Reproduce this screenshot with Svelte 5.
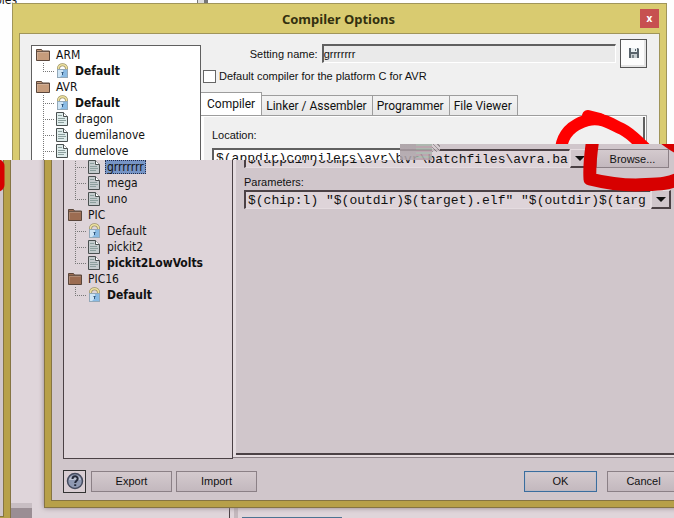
<script>
  const topTree = [
    { name: "ARM", items: [{ name: "Default", locked: true, bold: true }] },
    {
      name: "AVR",
      items: [
        { name: "Default", locked: true, bold: true },
        { name: "dragon" },
        { name: "duemilanove" },
        { name: "dumelove" },
        { name: "", selected: true }
      ]
    }
  ];

  const lowerTree = [
    { name: "", items: [{ name: "grrrrrrr", selected: true }, { name: "mega" }, { name: "uno" }] },
    {
      name: "PIC",
      items: [{ name: "Default", locked: true }, { name: "pickit2" }, { name: "pickit2LowVolts", bold: true }]
    },
    { name: "PIC16", items: [{ name: "Default", locked: true, bold: true }] }
  ];

  const tabs = ["Compiler", "Linker / Assembler", "Programmer", "File Viewer"];

  let activeTab = $state("Compiler");
  let settingName = $state("grrrrrrr");
  let isDefault = $state(false);
  let location = $state("$(appdir)compilers\\avr\\batchfiles\\avra.ba");
  let parameters = $state('$(chip:l) "$(outdir)$(target).elf" "$(outdir)$(targ');
</script>

{#snippet folderIcon()}
  <svg class="icon" viewBox="0 0 16 16" width="16" height="16" aria-hidden="true">
    <path d="M1.5 13.5V2.5H6.5L7.5 4H14.5V13.5Z" fill="var(--folder)" stroke="#5a463b" />
    <path d="M2 4.5H14" stroke="#6d5648" />
    <path d="M2.5 12.5V5.5H13.5" fill="none" stroke="#fff" stroke-opacity="0.2" />
  </svg>
{/snippet}

{#snippet lockIcon()}
  <svg class="icon" viewBox="0 0 16 16" width="16" height="16" aria-hidden="true">
    <path d="M4.5 8V5.5C4.5 0.5 12.5 0.5 12.5 5.5V8" fill="none" stroke="#9c9264" stroke-width="3" />
    <path d="M4.5 8V5.5C4.5 0.5 12.5 0.5 12.5 5.5V8" fill="none" stroke="#ece0a0" stroke-width="1.5" />
    <rect x="3.5" y="6.5" width="10" height="8" fill="#cfe5f5" stroke="#93a8b8" />
    <path d="M9 7H13V14H6L9 11Z" fill="#8abbe4" />
    <path d="M7.5 9.5H9.5M8.5 9V12" stroke="#2f567d" />
  </svg>
{/snippet}

{#snippet fileIcon()}
  <svg class="icon" viewBox="0 0 16 16" width="16" height="16" aria-hidden="true">
    <path d="M2.5 1.5H9.5L13.5 5.5V14.5H2.5Z" fill="var(--paper)" stroke="#4a5050" />
    <path d="M9.5 1.5V5.5H13.5" fill="#fff" stroke="#4a5050" />
    <path d="M4 4.5H8M4 7.5H11M4 9.5H12M4 11.5H10" stroke="#8c9f9d" />
  </svg>
{/snippet}

{#snippet tree(groups)}
  <ul class="tree">
    {#each groups as group}
      <li>
        {#if group.name}
          <div class="row">{@render folderIcon()}<span class="name">{group.name}</span></div>
        {/if}
        <ul class="branch">
          {#each group.items as item}
            <li class="row leaf">
              {#if item.locked}{@render lockIcon()}{:else}{@render fileIcon()}{/if}
              <span class="name" class:bold={item.bold} class:selected={item.selected}>{item.name}</span>
            </li>
          {/each}
        </ul>
      </li>
    {/each}
  </ul>
{/snippet}

<main class="desktop">
  <section class="upper">
    <div class="behind"><span class="behind-text">bles</span><i class="bar"></i></div>

    <div class="dialog">
      <header class="titlebar">
        <h1>Compiler Options</h1>
        <button class="close" aria-label="Close">x</button>
      </header>
      <div class="body">
        {@render tree(topTree)}
        <div class="settings">
          <div class="setting-row">
            <label for="setting-name">Setting name:</label>
            <input id="setting-name" class="sunken" bind:value={settingName} />
            <button class="save" aria-label="Save">
              <svg viewBox="0 0 10 10" width="10" height="10" aria-hidden="true">
                <path d="M0 0H9L10 1V10H0Z" fill="#59636b" />
                <rect x="2" y="0" width="6" height="4" fill="#e8eef0" />
                <rect x="6" y="1" width="1" height="2" fill="#59636b" />
                <rect x="2" y="6" width="6" height="4" fill="#c7ced1" />
                <rect x="3" y="7" width="2" height="3" fill="#7d878c" />
              </svg>
            </button>
          </div>
          <label class="check">
            <input type="checkbox" bind:checked={isDefault} />
            Default compiler for the platform C for AVR
          </label>
          <div class="tabs" role="tablist">
            {#each tabs as tab}
              <button role="tab" aria-selected={activeTab === tab} class:active={activeTab === tab} onclick={() => (activeTab = tab)}>
                {tab}
              </button>
            {/each}
          </div>
          <div class="panel">
            <div class="inner">
              <label for="location">Location:</label>
              <div class="combo"><input id="location" class="sunken" bind:value={location} /></div>
            </div>
          </div>
        </div>
      </div>
    </div>

    <svg class="scribble" viewBox="0 0 674 160" width="674" height="160" aria-hidden="true">
      <path d="M561 148C563 134 571 125 588 120C604 117 612 125 622 129C632 134 637 141 646 149" />
      <path d="M588 116L600 119" />
    </svg>
  </section>

  <section class="lower">
    <div class="other-window"><i></i></div>
    <div class="ledge"><i></i></div>

    <div class="dialog">
      <div class="body">
        {@render tree(lowerTree)}
        <div class="settings">
          <div class="panel">
            <div class="inner">
              <div class="field">
                <div class="combo">
                  <input class="sunken" aria-label="Location" bind:value={location} />
                  <button class="drop" aria-label="Show locations"></button>
                </div>
                <button class="push browse">Browse...</button>
              </div>
              <label for="parameters">Parameters:</label>
              <div class="combo">
                <input id="parameters" class="sunken" bind:value={parameters} />
                <button class="drop" aria-label="Show parameters"></button>
              </div>
            </div>
          </div>
        </div>
      </div>
      <footer>
        <button class="help" aria-label="Help">
          <svg viewBox="0 0 18 18" width="18" height="18" aria-hidden="true">
            <circle cx="9" cy="9" r="7.5" fill="#8f99b2" stroke="#454b5e" stroke-width="1.5" />
            <path d="M3 8C4 2 14 2 15 8Z" fill="#bcc3d4" />
            <path d="M6.5 7C6.5 3.5 11.7 3.5 11.7 6.7C11.7 8.8 9.2 8.7 9.2 11M9.2 12.3V14" fill="none" stroke="#252a39" stroke-width="2" />
          </svg>
        </button>
        <button class="push">Export</button>
        <button class="push">Import</button>
        <span class="spacer"></span>
        <button class="push ok">OK</button>
        <button class="push">Cancel</button>
      </footer>
    </div>
    <div class="under"><i></i></div>

    <svg class="scribble dark" viewBox="0 0 674 374" width="674" height="374" aria-hidden="true">
      <path d="M593 -6C591 8 589 20 590 35C602 38 620 41 636 41C655 40 668 41 680 34" />
      <path d="M664 -6C670 -2 674 2 680 4" />
      <path d="M-2 22V41" />
    </svg>
    <div class="static" aria-hidden="true"></div>
  </section>
</main>

<style>
  :global(body) {
    margin: 0;
    overflow: hidden;
  }

  .desktop {
    position: relative;
    overflow: hidden;
    font: 11px/16px "Liberation Sans", Arial, sans-serif;
    color: #111;
  }

  .upper,
  .lower {
    position: relative;
    overflow: hidden;
  }

  .upper {
    --face: #f0f0f0;
    --field: #fff;
    --gold: #d9cb70;
    --gold-line: #a0955a;
    --line: #9d9d9d;
    --dark: #606060;
    --light: #fff;
    --folder: #c69c7c;
    --paper: #dfeceb;
    height: 160px;
    background: #fefefe;
  }

  /* the second frame starts higher on its right-hand side */
  .lower {
    --face: #d0c6cb;
    --field: #ded4d9;
    --gold: #b7a049;
    --gold-line: #857443;
    --line: #8b8086;
    --dark: #4b4145;
    --light: #e5dce0;
    --folder: #9c6c51;
    --paper: #c4cbcd;
    height: 374px;
    margin-top: -16px;
    background: #dfd5da;
    clip-path: polygon(0 16px, 400px 16px, 400px 0, 100% 0, 100% 100%, 0 100%);
  }

  .dialog {
    position: relative;
    box-sizing: border-box;
    border: 1px solid var(--gold-line);
    background: var(--gold);
    padding: 0 6px 6px;
  }

  .upper .dialog {
    margin: 0 7px 0 12px;
  }

  .lower .dialog {
    margin: 0 -25px 0 44px;
    border-top: 0;
    box-shadow: 0 0 5px #8f8287;
  }

  .behind {
    display: flex;
    height: 3px;
  }

  .behind-text {
    width: 202px;
    margin: -8px 0 0 -5px;
    font: 12px/16px "DejaVu Sans Condensed", sans-serif;
  }

  .bar {
    box-sizing: border-box;
    width: 11px;
    border: solid #777;
    border-width: 0 4px 0 1px;
    background: #ddd;
  }

  .titlebar {
    display: flex;
    height: 29px;
    align-items: center;
    padding-right: 1px;
  }

  h1 {
    flex: 1;
    margin: 0;
    padding-left: 18px;
    text-align: center;
    font: 700 13px/20px "Noto Sans", sans-serif;
    color: #33300f;
  }

  .close {
    width: 19px;
    height: 19px;
    padding: 0 0 2px;
    border: 0;
    background: #c75050;
    color: #fff;
    font: 700 10px/16px "Noto Sans", sans-serif;
  }

  .body {
    display: flex;
    background: var(--face);
    border: 1px solid var(--gold-line);
    border-bottom: 0;
  }

  .upper .body {
    height: 130px;
    padding: 11px 12px 0 11px;
  }

  .lower .body {
    height: 315px;
    border-top: 0;
    padding: 0 12px 0 11px;
  }

  ul {
    margin: 0;
    padding: 0;
    list-style: none;
  }

  .tree {
    box-sizing: border-box;
    width: 170px;
    padding: 1px 0 0 3px;
    border: 1px solid var(--dark);
    background: var(--field);
    font: 12px/16px "DejaVu Sans Condensed", "Noto Sans", sans-serif;
  }

  .lower .tree {
    border-top: 0;
    padding-top: 15px;
  }

  .row {
    display: flex;
    height: 16px;
    align-items: center;
    gap: 3px;
  }

  .branch {
    padding-left: 8px;
  }

  .leaf {
    padding-left: 11px;
    background:
      repeating-linear-gradient(90deg, #777 0 1px, transparent 1px 2px) 0 8px / 11px 1px no-repeat,
      repeating-linear-gradient(#777 0 1px, transparent 1px 2px) 0 0 / 1px 16px no-repeat;
  }

  .leaf:last-child {
    background-size: 11px 1px, 1px 8px;
  }

  .icon {
    flex: none;
  }

  .name {
    padding: 0 2px;
  }

  .bold {
    font-weight: 700;
  }

  .selected {
    min-width: 34px;
    height: 14px;
    line-height: 14px;
    background: #7795c6;
    outline: 1px dotted #222b49;
    outline-offset: -1px;
  }

  .settings {
    flex: 1;
    min-width: 0;
  }

  .upper .settings {
    margin-top: -6px;
  }

  .setting-row {
    display: flex;
    align-items: center;
    justify-content: flex-end;
    gap: 4px;
    height: 29px;
  }

  .sunken {
    box-sizing: border-box;
    min-width: 0;
    margin: 0;
    border: 1px solid var(--light);
    border-top: 2px solid var(--dark);
    border-left: 2px solid var(--dark);
    border-radius: 0;
    background: var(--field);
    color: #111;
    font: 13px/16px "Liberation Mono", "Courier New", monospace;
    padding: 0 0 0 2px;
  }

  .setting-row .sunken {
    flex: none;
    width: 66%;
    height: 19px;
    background: #eaeaea;
    font: 11px/16px "Liberation Sans", Arial, sans-serif;
    padding: 0;
  }

  .save {
    width: 27px;
    height: 29px;
    padding: 0;
    border: 1px solid #555;
    background: #fcfcfc;
    box-shadow: inset -2px -2px #e4e4e4;
  }

  .check {
    display: flex;
    align-items: center;
    gap: 3px;
    height: 16px;
    padding-left: 2px;
  }

  .check input {
    appearance: none;
    width: 13px;
    height: 13px;
    margin: 0;
    border: 1px solid #666;
    background: #fff;
  }

  .tabs {
    display: flex;
    align-items: flex-end;
    height: 23px;
    margin-top: 8px;
  }

  .tabs button {
    height: 20px;
    padding: 0 5px 0 4px;
    border: 1px solid var(--line);
    border-left-width: 0;
    border-bottom: 0;
    background: linear-gradient(#f3f3f3, #e8e8e8);
    color: #111;
    font: 12px/16px Roboto, sans-serif;
  }

  .tabs .active {
    height: 23px;
    padding: 0 6px;
    background: #fff;
  }

  .panel {
    box-sizing: border-box;
    border: 1px solid var(--line);
    border-left: 0;
    padding: 1px 1px 2px 3px;
    background: var(--light);
  }

  .inner {
    box-sizing: border-box;
    border-right: 2px solid var(--dark);
    background: var(--face);
    padding: 10px 4px 0 8px;
  }

  .lower .panel {
    height: 314px;
    border-top: 0;
    padding-top: 0;
  }

  .lower .inner {
    height: 311px;
    border-bottom: 2px solid var(--dark);
    padding-top: 5px;
  }

  .inner label {
    display: block;
  }

  .upper .combo {
    width: 86%;
    margin-top: 5px;
  }

  .combo {
    display: flex;
    flex: 1;
    min-width: 0;
  }

  .combo .sunken {
    flex: 1;
    height: 19px;
  }

  .field {
    display: flex;
    gap: 6px;
    margin-bottom: 6px;
    padding-right: 2px;
  }

  .drop {
    width: 20px;
    height: 19px;
    padding: 0;
    border: 1px solid var(--light);
    border-right: 2px solid var(--dark);
    border-bottom: 2px solid var(--dark);
    background: var(--face);
  }

  .drop::before {
    content: "";
    display: block;
    margin: 0 auto;
    width: 0;
    border: 5px solid transparent;
    border-top-color: #111;
    border-bottom: 0;
  }

  .push {
    box-sizing: border-box;
    width: 81px;
    height: 21px;
    padding: 0;
    border: 1px solid var(--line);
    background: linear-gradient(#d4cace, #c3b8be);
    color: #111;
    font: 11px/16px "Liberation Sans", Arial, sans-serif;
  }

  .browse {
    width: 73px;
    height: 19px;
  }

  footer {
    display: flex;
    align-items: center;
    gap: 4px;
    height: 38px;
    padding: 3px 11px 0;
    border: 1px solid var(--gold-line);
    border-top: 0;
    background: var(--face);
  }

  .help {
    width: 23px;
    height: 23px;
    padding: 0;
    border: 1px solid #333;
    background: #d9ced3;
    margin-right: 1px;
  }

  .help svg {
    display: block;
    margin: 0 auto;
  }

  .spacer {
    flex: 1;
  }

  .ok {
    border-color: #3a6d9e;
    margin-right: 6px;
    box-shadow: inset 0 0 1px #6fb3e4;
  }

  .ok,
  .ok + .push {
    width: 73px;
  }

  .scribble {
    position: absolute;
    top: 0;
    left: 0;
    fill: none;
    stroke: #fe0000;
    stroke-width: 12px;
    stroke-linecap: round;
    stroke-linejoin: round;
    pointer-events: none;
  }

  .dark {
    stroke: #d70000;
    stroke-width: 13px;
  }

  /* block of broken pixels on the seam between the two frames */
  .static {
    position: absolute;
    top: 0;
    left: 400px;
    width: 40px;
    height: 16px;
    background:
      repeating-linear-gradient(45deg, #8f878b 0 1px, #d5ccd0 1px 3px) 32px 0 / 8px 8px no-repeat,
      repeating-linear-gradient(#a8b5ac 0 2px, #b79fa8 2px 4px) 16px 0 / 16px 16px no-repeat,
      linear-gradient(#aaa0a5, #b4aaaf) 0 0 / 16px 16px no-repeat;
    opacity: 0.85;
  }

  .other-window {
    position: absolute;
    top: 0;
    left: 0;
    box-sizing: border-box;
    width: 11px;
    height: 100%;
    padding: 0 6px 1px 0;
    border-right: 1px solid var(--gold-line);
    background: var(--gold);
  }

  .other-window i {
    display: block;
    box-sizing: border-box;
    height: 100%;
    border: 1px solid var(--gold-line);
    border-width: 0 1px 1px 0;
    background: var(--face);
  }

  .ledge {
    position: absolute;
    top: 359px;
    left: 11px;
    width: 21px;
    height: 15px;
    background: #9a8e94;
  }

  .ledge i {
    display: block;
    height: 5px;
    background: #c8bec3;
  }

  .under {
    box-sizing: border-box;
    height: 10px;
    margin-left: 229px;
    border-left: 1px solid #4b4145;
    padding: 9px 0 0 12px;
    background: linear-gradient(90deg, transparent 4px, #c3b8bd 4px 8px, transparent 8px);
  }

  .under i {
    display: block;
    width: 100px;
    height: 1px;
    background: #4d7492;
  }
</style>
